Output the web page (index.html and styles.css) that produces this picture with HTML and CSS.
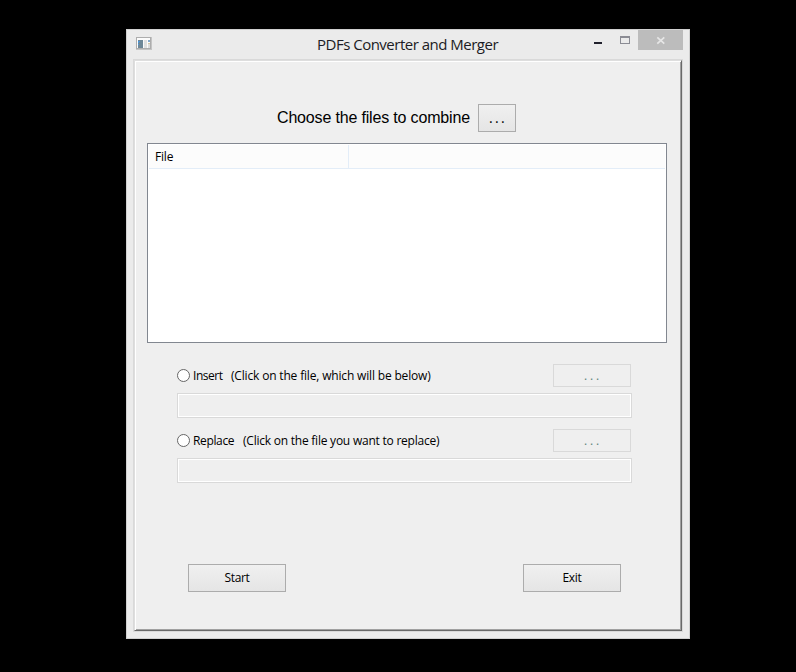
FILE: index.html
```html
<!DOCTYPE html>
<html lang="en">
<head>
<meta charset="utf-8">
<title>PDFs Converter and Merger</title>
<link rel="stylesheet" href="styles.css">
</head>
<body>
<main class="window">
  <header class="titlebar">
    <svg class="app-icon" width="16" height="13" viewBox="0 0 16 13" shape-rendering="crispEdges">
      <path fill="#c4c4c4" d="M0 0h16v13H0z"/>
      <path fill="#adadad" d="M0 0h15v1H0zM0 1h1v11H0zM14 1h1v11h-1zM1 11h13v1H1z"/>
      <path fill="#fbfbfb" d="M1 1h13v10H1z"/>
      <path fill="#6e8797" d="M2 3h5v8H2z"/>
      <path fill="#4d96d8" d="M2 4h2v1H2zM2 5h1v1H2zM2 7h1v1H2z"/>
      <path fill="#e0e0e0" d="M8 3h3v8H8z"/>
      <path fill="#86a9cc" d="M12 3h2v2h-2z"/>
      <path fill="#d8c79c" d="M12 6h2v1h-2z"/>
      <path fill="#dcdcdc" d="M12 7h2v4h-2z"/>
    </svg>
    <h1 class="title">PDFs Converter and Merger</h1>
    <div class="controls">
      <svg class="control" width="27" height="21" viewBox="611 30 27 21" shape-rendering="crispEdges">
        <path fill="#8b8c94" d="M620 36h10v8h-10z"/>
        <path fill="#ebebeb" d="M621 38h8v5h-8z"/>
      </svg>
      <div class="close">
        <svg width="45" height="20" viewBox="0 0 45 20"><path d="M19.3 7.3l7 6.4M26.3 7.3l-7 6.4" stroke="#e6e6e6" stroke-width="1.7"/></svg>
      </div>
    </div>
  </header>
  <section class="frame">
    <div class="client">
      <div class="choose">
        <span class="choose-text">Choose the files to combine</span>
        <button class="button browse"><span class="dots">...</span></button>
      </div>
      <div class="list">
        <div class="list-head"><div class="column"><span class="file">File</span></div></div>
      </div>
      <div class="option">
        <div class="option-row">
          <span class="radio"></span><span class="label insert">Insert</span><span class="label insert-hint">(Click on the file, which will be below)</span>
          <button class="button disabled" disabled><span class="dots">...</span></button>
        </div>
        <div class="field"></div>
      </div>
      <div class="option">
        <div class="option-row">
          <span class="radio"></span><span class="label replace">Replace</span><span class="label replace-hint">(Click on the file you want to replace)</span>
          <button class="button disabled" disabled><span class="dots">...</span></button>
        </div>
        <div class="field"></div>
      </div>
      <div class="actions">
        <button class="button action">Start</button>
        <button class="button action">Exit</button>
      </div>
    </div>
  </section>
</main>
</body>
</html>
```
FILE: styles.css
```css
* { box-sizing: border-box; }
body {
  margin: 0;
  height: 672px;
  padding: 29px 0 0 126px;
  background: #000;
  overflow: hidden;
  font: 12px/16px "Open Sans", "Noto Sans", sans-serif;
  color: #000;
}
.window {
  width: 564px;
  height: 610px;
  border: 1px solid #d0d0d0;
  background: #ebebeb;
}
.titlebar {
  height: 29px;
  display: flex;
  align-items: flex-start;
}
.app-icon { margin: 7px 0 0 9px; flex: none; }
.title {
  margin: 4px 0 0 165px;
  width: 264px;
  font-size: 15px;
  line-height: 20px;
  font-weight: 400;
  letter-spacing: -0.5px;
  color: #1c1c24;
  white-space: nowrap;
}
.controls { display: flex; flex: none; margin-left: 13px; }
.control { display: block; }
.controls::before {
  content: "";
  width: 8px;
  height: 2px;
  margin: 12px 9px 0 0;
  background: #20202c;
}
.close { width: 45px; height: 20px; background: #bcbcbc; }
.close svg { display: block; }
.frame {
  width: 550px;
  height: 573px;
  margin-left: 6px;
  border: 1px solid #d9d9d9;
}
.client {
  height: 571px;
  border: 1px solid;
  border-color: #dedede #696969 #696969 #dedede;
  background: #efefef;
  padding: 43px 14px 0 12px;
  box-shadow: inset 1px 1px #fff, inset -1px -1px #a0a0a0;
}
.choose {
  display: flex;
  align-items: center;
  justify-content: flex-end;
  height: 28px;
  padding-right: 151px;
  gap: 8px;
}
.choose-text {
  width: 193px;
  font: 16px/20px "Liberation Sans", sans-serif;
  letter-spacing: -0.17px;
  white-space: nowrap;
}
.button {
  display: block;
  padding: 0;
  border: 1px solid #acacac;
  background: linear-gradient(#f0f0f0, #e5e5e5);
  font: inherit;
  color: #000;
  text-align: center;
}
.browse { width: 38px; height: 28px; font-size: 14px; }
.dots { letter-spacing: 2.8px; padding-left: 2px; }
.browse .dots { letter-spacing: 2.3px; }
.list {
  height: 200px;
  margin: 11px 0 21px;
  border: 1px solid #828790;
  background: #fff;
  padding: 1px;
}
.list-head {
  height: 24px;
  background: #fcfcfc;
  border-bottom: 1px solid #e3edf8;
}
.column {
  width: 200px;
  height: 23px;
  padding: 4px 0 0 6px;
  border-right: 1px solid #e3edf8;
}
.file { letter-spacing: -0.2px; }
.option { height: 65px; padding: 0 35px 0 30px; }
.option-row { display: flex; align-items: center; height: 23px; width: 454px; }
.option-row .button { margin-left: auto; }
.radio {
  width: 13px;
  height: 13px;
  margin-right: 3px;
  border: 1px solid #666;
  border-radius: 50%;
  background: #fff;
}
.label { white-space: nowrap; letter-spacing: -0.2px; }
.insert { width: 38px; letter-spacing: -0.45px; }
.replace { width: 50px; letter-spacing: -0.35px; }
.insert-hint { letter-spacing: -0.17px; }
.replace-hint { letter-spacing: -0.23px; }
.disabled { width: 78px; height: 23px; border-color: #d9d9d9; background: #efefef; color: #5f827c; }
.field {
  height: 25px;
  margin-top: 6px;
  border: 1px solid #d9d9d9;
  box-shadow: inset 0 0 0 1px #fff;
}
.actions {
  display: flex;
  justify-content: space-between;
  margin-top: 70px;
  padding: 0 46px 0 41px;
}
.action { width: 98px; height: 28px; letter-spacing: -0.3px; }
```
